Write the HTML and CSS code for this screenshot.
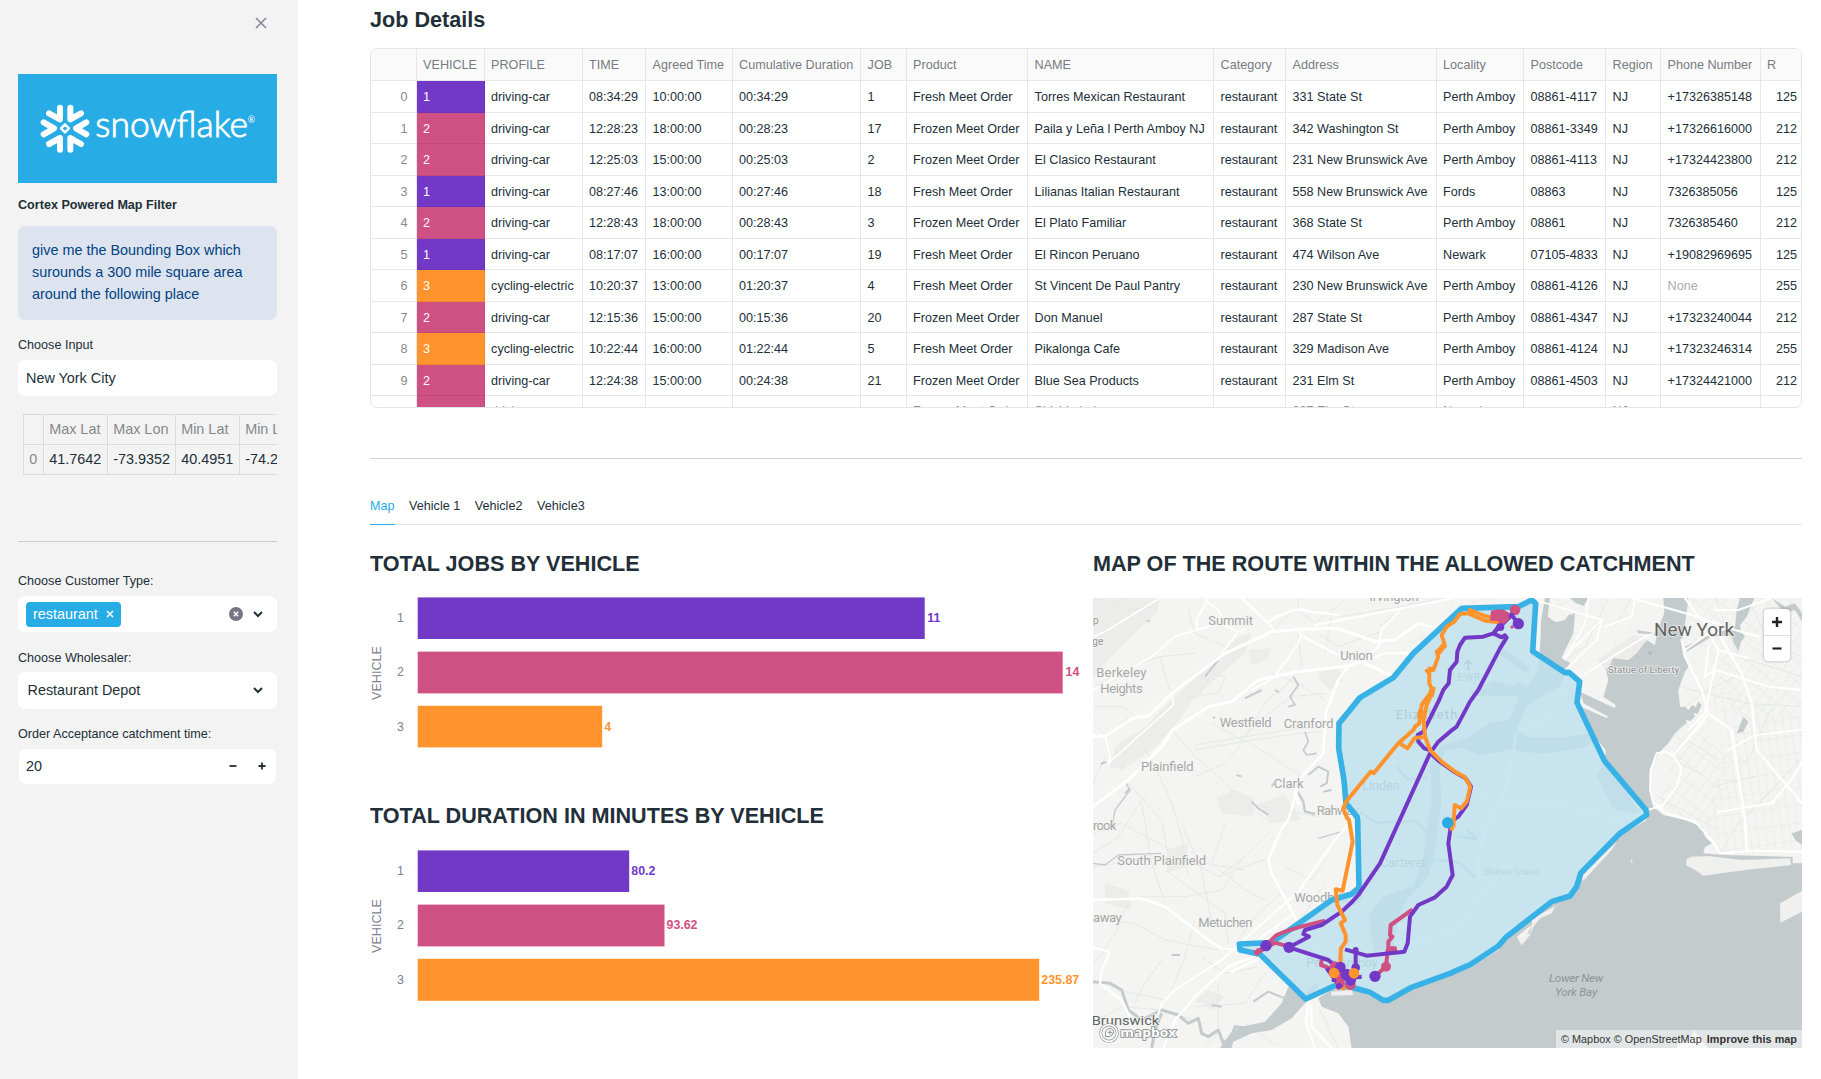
FILE: index.html
```html
<!DOCTYPE html>
<html lang="en">
<head>
<meta charset="utf-8">
<title>Job Details</title>
<link rel="stylesheet" href="styles.css">
</head>
<body>
<div class="app">
<aside class="sidebar">
  <div class="sidebar-top">
    <svg class="close" viewBox="0 0 12 12"><path d="M1 1l10 10M11 1L1 11"/></svg>
  </div>
  <svg class="logo" viewBox="54 222 777 327">
    <g fill="none" stroke="#fff" stroke-width="18" stroke-linecap="round" stroke-linejoin="round">
      <path d="M147 340L180 358V323M243 340L211 358V323M147 432L180 414V449M243 432L211 414V449M131 367L162 385L131 403M259 367L228 385L259 403"/>
      <path stroke-width="7" d="M195 373L207 385L195 397L183 385Z"/>
    </g>
    <text class="logo-word" x="286" y="411" textLength="458" lengthAdjust="spacingAndGlyphs">snowflake</text>
    <text class="logo-mark" x="743" y="368">®</text>
  </svg>
  <h4 class="sidebar-title">Cortex Powered Map Filter</h4>
  <div class="info">give me the Bounding Box which surounds a 300 mile square area around the following place</div>
  <label class="label label-input">Choose Input</label>
  <div class="field"><span class="value">New York City</span></div>
  <div class="bbox-wrap">
    <div class="bbox">
      <span></span><span>Max Lat</span><span>Max Lon</span><span>Min Lat</span><span>Min Lon</span>
      <span class="dim">0</span><b>41.7642</b><b>-73.9352</b><b>40.4951</b><b>-74.2591</b>
    </div>
  </div>
  <hr class="side-rule">
  <label class="label label-type">Choose Customer Type:</label>
  <div class="field">
    <span class="tag">restaurant<svg viewBox="0 0 8 8"><path d="M1 1l6 6M7 1L1 7"/></svg></span>
    <svg class="clear" viewBox="0 0 14 14"><circle cx="7" cy="7" r="7"/><path d="M4.8 4.8l4.4 4.4M9.2 4.8L4.8 9.2"/></svg>
    <svg class="chev" viewBox="0 0 10 7"><path d="M1 1l4 4 4-4"/></svg>
  </div>
  <label class="label label-whole">Choose Wholesaler:</label>
  <div class="field field-select"><span class="value">Restaurant Depot</span>
    <svg class="chev" viewBox="0 0 10 7"><path d="M1 1l4 4 4-4"/></svg>
  </div>
  <label class="label label-time">Order Acceptance catchment time:</label>
  <div class="field field-number"><span class="value">20</span>
    <svg class="step" viewBox="0 0 8 8"><path d="M.5 4h7"/></svg>
    <svg class="step step-plus" viewBox="0 0 8 8"><path d="M.5 4h7M4 .5v7"/></svg>
  </div>
</aside>

<main class="main">
  <h3 class="title">Job Details</h3>
  <div class="grid">
    <div class="row head"><i></i><i>VEHICLE</i><i>PROFILE</i><i>TIME</i><i>Agreed Time</i><i>Cumulative Duration</i><i>JOB</i><i>Product</i><i>NAME</i><i>Category</i><i>Address</i><i>Locality</i><i>Postcode</i><i>Region</i><i>Phone Number</i><i>R</i></div>
    <div class="row"><i>0</i><i class="v1">1</i><i>driving-car</i><i>08:34:29</i><i>10:00:00</i><i>00:34:29</i><i>1</i><i>Fresh Meet Order</i><i>Torres Mexican Restaurant</i><i>restaurant</i><i>331 State St</i><i>Perth Amboy</i><i>08861-4117</i><i>NJ</i><i>+17326385148</i><i>125</i></div>
    <div class="row"><i>1</i><i class="v2">2</i><i>driving-car</i><i>12:28:23</i><i>18:00:00</i><i>00:28:23</i><i>17</i><i>Frozen Meet Order</i><i>Paila y Leña l Perth Amboy NJ</i><i>restaurant</i><i>342 Washington St</i><i>Perth Amboy</i><i>08861-3349</i><i>NJ</i><i>+17326616000</i><i>212</i></div>
    <div class="row"><i>2</i><i class="v2">2</i><i>driving-car</i><i>12:25:03</i><i>15:00:00</i><i>00:25:03</i><i>2</i><i>Frozen Meet Order</i><i>El Clasico Restaurant</i><i>restaurant</i><i>231 New Brunswick Ave</i><i>Perth Amboy</i><i>08861-4113</i><i>NJ</i><i>+17324423800</i><i>212</i></div>
    <div class="row"><i>3</i><i class="v1">1</i><i>driving-car</i><i>08:27:46</i><i>13:00:00</i><i>00:27:46</i><i>18</i><i>Fresh Meet Order</i><i>Lilianas Italian Restaurant</i><i>restaurant</i><i>558 New Brunswick Ave</i><i>Fords</i><i>08863</i><i>NJ</i><i>7326385056</i><i>125</i></div>
    <div class="row"><i>4</i><i class="v2">2</i><i>driving-car</i><i>12:28:43</i><i>18:00:00</i><i>00:28:43</i><i>3</i><i>Frozen Meet Order</i><i>El Plato Familiar</i><i>restaurant</i><i>368 State St</i><i>Perth Amboy</i><i>08861</i><i>NJ</i><i>7326385460</i><i>212</i></div>
    <div class="row"><i>5</i><i class="v1">1</i><i>driving-car</i><i>08:17:07</i><i>16:00:00</i><i>00:17:07</i><i>19</i><i>Fresh Meet Order</i><i>El Rincon Peruano</i><i>restaurant</i><i>474 Wilson Ave</i><i>Newark</i><i>07105-4833</i><i>NJ</i><i>+19082969695</i><i>125</i></div>
    <div class="row"><i>6</i><i class="v3">3</i><i>cycling-electric</i><i>10:20:37</i><i>13:00:00</i><i>01:20:37</i><i>4</i><i>Fresh Meet Order</i><i>St Vincent De Paul Pantry</i><i>restaurant</i><i>230 New Brunswick Ave</i><i>Perth Amboy</i><i>08861-4126</i><i>NJ</i><i class="none">None</i><i>255</i></div>
    <div class="row"><i>7</i><i class="v2">2</i><i>driving-car</i><i>12:15:36</i><i>15:00:00</i><i>00:15:36</i><i>20</i><i>Frozen Meet Order</i><i>Don Manuel</i><i>restaurant</i><i>287 State St</i><i>Perth Amboy</i><i>08861-4347</i><i>NJ</i><i>+17323240044</i><i>212</i></div>
    <div class="row"><i>8</i><i class="v3">3</i><i>cycling-electric</i><i>10:22:44</i><i>16:00:00</i><i>01:22:44</i><i>5</i><i>Fresh Meet Order</i><i>Pikalonga Cafe</i><i>restaurant</i><i>329 Madison Ave</i><i>Perth Amboy</i><i>08861-4124</i><i>NJ</i><i>+17323246314</i><i>255</i></div>
    <div class="row"><i>9</i><i class="v2">2</i><i>driving-car</i><i>12:24:38</i><i>15:00:00</i><i>00:24:38</i><i>21</i><i>Frozen Meet Order</i><i>Blue Sea Products</i><i>restaurant</i><i>231 Elm St</i><i>Perth Amboy</i><i>08861-4503</i><i>NJ</i><i>+17324421000</i><i>212</i></div>
    <div class="row partial"><i></i><i class="v2"></i><i>driving-car</i><i></i><i></i><i></i><i></i><i>Frozen Meet Order</i><i>Shishkabob</i><i></i><i>337 Elm St</i><i>Newark</i><i></i><i>NJ</i><i></i><i></i></div>
  </div>
  <hr class="main-rule">
  <nav class="tabs"><a class="active">Map</a><a>Vehicle 1</a><a>Vehicle2</a><a>Vehicle3</a></nav>
  <div class="columns">
    <section class="charts">
      <h3 class="heading">TOTAL JOBS BY VEHICLE</h3>
      <svg class="chart" viewBox="370 597 710 152">
        <text class="axis-title" transform="translate(381 673) rotate(-90)">VEHICLE</text>
        <text class="tick" x="400.5" y="622">1</text><text class="tick" x="400.5" y="676.2">2</text><text class="tick" x="400.5" y="730.5">3</text>
        <rect class="f1" x="417.7" y="597.4" width="507" height="41.6"/><text class="f1" x="927.3" y="622">11</text>
        <rect class="f2" x="417.7" y="651.6" width="645" height="41.8"/><text class="f2" x="1065.5" y="676.2">14</text>
        <rect class="f3" x="417.7" y="705.8" width="184.5" height="41.6"/><text class="f3" x="604.3" y="730.5">4</text>
      </svg>
      <h3 class="heading heading-second">TOTAL DURATION IN MINUTES BY VEHICLE</h3>
      <svg class="chart" viewBox="370 597 710 152">
        <text class="axis-title" transform="translate(381 673) rotate(-90)">VEHICLE</text>
        <text class="tick" x="400.5" y="622">1</text><text class="tick" x="400.5" y="676.2">2</text><text class="tick" x="400.5" y="730.5">3</text>
        <rect class="f1" x="417.7" y="597.4" width="211.5" height="41.6"/><text class="f1" x="631.3" y="622">80.2</text>
        <rect class="f2" x="417.7" y="651.6" width="246.8" height="41.8"/><text class="f2" x="666.5" y="676.2">93.62</text>
        <rect class="f3" x="417.7" y="705.8" width="621.5" height="42"/><text class="f3" x="1041.3" y="730.5">235.87</text>
      </svg>
    </section>
    <section class="map-col">
      <h3 class="heading">MAP OF THE ROUTE WITHIN THE ALLOWED CATCHMENT</h3>
      <div class="map">
        <svg class="map-svg" viewBox="24 24 2127 1350">
          <defs>
            <pattern id="st1" width="26" height="44" patternUnits="userSpaceOnUse" patternTransform="rotate(38)"><path d="M0 0H26M0 0V44" stroke="#e3e5e6" stroke-width="3" fill="none"/></pattern>
            <pattern id="st2" width="24" height="52" patternUnits="userSpaceOnUse" patternTransform="rotate(-8)"><path d="M0 0H24M0 0V52" stroke="#e6e8e8" stroke-width="3" fill="none"/></pattern>
            <pattern id="st3" width="60" height="48" patternUnits="userSpaceOnUse" patternTransform="rotate(-20)"><path d="M0 0H60M0 0V48" stroke="#e9ebeb" stroke-width="3" fill="none"/></pattern>
          </defs>
          <rect x="24" y="24" width="2127" height="1350" fill="#f4f5f2"/>
          <!-- parks and hills -->
          <g class="hill">
            <path d="M24 24H225L215 70L150 130L90 190L24 260Z"/>
            <path d="M75 530L90 470L180 410L260 330L400 200L460 140L500 130L480 190L400 260L330 320L260 420L200 480L110 540Z"/>
            <path d="M490 180L560 175L545 210L500 225Z"/><path d="M700 240L760 235L775 270L735 300L705 270Z"/>
            <path d="M395 620L450 600L510 625L500 680L410 670Z"/><path d="M520 640L600 615L650 690L560 700Z"/>
            <path d="M250 780L310 760L300 830L245 850Z"/><path d="M60 880L130 900L140 960L60 940Z"/>
            <path d="M330 1230L370 1200L420 1220L380 1260Z"/><path d="M600 1180L640 1150L690 1190L680 1240L630 1210Z"/>
            <path d="M1590 170L1640 135L1680 140L1670 190L1610 210L1560 240L1540 210Z"/>
          </g>
          <!-- minor streets -->
          <path fill="url(#st1)" d="M1790 24H2151V380L1960 400L1870 200L1800 170ZM1780 370L1950 470L1870 740L1720 640L1760 520Z"/>
          <path fill="url(#st2)" d="M1870 280L2151 380V780L1910 800L1860 700L1920 480ZM1850 700L1920 690L2120 690L2115 780L1905 790Z"/>
          <path fill="url(#st3)" d="M930 24H1340V60H1130L985 190L860 150ZM1380 24L1640 24V160L1500 240L1420 220Z"/>
          <g class="minor">
            <path d="M24 290L120 250L150 225L225 200L330 190M225 200L260 320M24 350L110 350L160 385M100 420L130 380M24 400L60 435M40 24L130 60L215 50M60 500L20 590M270 430L330 500L400 560L480 640L560 700M160 440L215 540L260 640L290 740L310 860M120 570L230 690L250 800M330 465L480 440L640 415L720 410M330 480L470 455L640 430L715 425M480 450L560 500L650 560M480 450L420 520L330 560M380 400L470 450L540 380L620 320L720 310M640 130L650 230L600 290L545 330L480 440M300 320L400 310L420 260L380 250L340 320L300 330M310 60L330 130L420 170M700 130L760 170L900 120M640 60L690 100L780 30M760 80L950 50L1070 24M1000 24L880 110M560 250L640 280L720 330M740 70L720 190M560 120L640 50L640 24M110 24L90 80M24 730L110 700L260 780L400 860L560 800M24 830L240 800L480 840M170 640L200 820L240 940M290 700L350 840L380 1000M24 790L100 740L190 600M470 810L410 900L300 920L160 920M420 700L380 820L480 900L540 930M560 720L480 800L400 860M240 840L420 970L430 1060M130 940L90 1030L50 1090L24 1120M24 990L150 1000L240 1050L400 1080M330 990L300 1100L260 1200M600 830L680 870L730 800M480 640L700 680M600 900L520 970L450 1060M640 1000L720 880M24 1300L110 1250L230 1260L360 1300M230 1110L180 1180L150 1240M400 1180L400 1330L360 1370M480 1300L580 1370M700 1250L760 1374M60 1374L160 1290M100 1200L240 1230M600 1100L540 1150L480 1240L330 1250M350 1100L420 1150L520 1130"/>
            <path d="M1700 260L1820 300L1990 340L2151 350M1780 370L1850 310L1950 260M1950 430L2151 425M1960 540L2000 490L2060 350M2151 500L2070 590L1960 700M1880 590L2010 560M1720 620L1900 720M1990 24L2050 160L2151 200M1890 24L1960 200L2151 260M1640 24L1590 110M1400 240L1500 170L1570 24M1900 800L1960 700L2100 560M1750 500L1860 560M1790 440L1900 510"/>
          </g>
          <!-- water -->
          <g class="water">
            <path d="M1380 24L1368 90L1365 190L1425 212L1465 130L1470 70L1450 75L1440 90L1412 97L1388 80L1395 24Z"/>
            <path d="M1455 24H1510L1496 48L1470 38Z"/>
            <path d="M1735 24L1738 70L1720 115L1715 130L1655 120L1660 130L1715 135L1710 165L1685 150L1655 190L1630 210L1585 205L1575 225L1590 240L1562 235L1570 270L1555 320L1592 345L1590 355L1485 305L1495 340L1570 380L1565 384L1488 350L1520 430L1562 480L1560 512L1600 590L1683 660L1685 690L1600 740L1487 860L1475 900L1400 945L1350 965L1348 990L1310 1065L1296 1040L1345 1000L1330 985L1240 1080L1157 1133L980 1200L900 1240L850 1215L800 1190L740 1200L700 1225L710 1250L760 1270L790 1310L800 1374H2151V720L2120 730L2130 750L2151 765V820H2123V800H2100L1920 795L1855 790L1860 772L1880 760L1860 740L1850 710L1800 690L1735 675L1705 650L1695 600L1697 540L1715 500L1730 480L1750 460L1770 430L1790 410L1805 400L1802 388L1815 394L1830 380L1826 368L1838 372L1850 345L1840 335L1832 352L1822 345L1810 360L1800 350L1785 350L1780 300L1800 245L1815 225L1796 185L1790 160L1805 70L1810 24Z"/>
            <path d="M1965 24H2008L1985 80L1965 105L1968 125L1980 140L1968 155L1960 185L1945 155L1940 135L1880 140L1805 185L1800 170L1860 140L1950 110L1955 60Z"/>
            <path d="M2060 24L2100 50L2130 40L2151 70V95L2130 60L2100 70Z"/>
            <path d="M1975 380L1990 395L1975 425L1955 430L1965 405Z"/>
            <path d="M700 1188L660 1240L620 1285L560 1320L500 1330L445 1355L440 1374L405 1374L440 1325L470 1310L540 1295L590 1240L610 1190L650 1220L690 1180Z"/>
            <!-- Newark Bay, Kill Van Kull and Arthur Kill -->
            <g transform="translate(735 18)">
              <path d="M630 150L720 200L690 270L640 300L590 330L560 400L600 425L700 425L790 410L800 435L760 455L640 475L540 460L450 480L400 455L345 465L328 530L335 620L322 700L312 790L290 850L240 900L205 960L190 1060L130 1065L115 960L160 900L250 870L278 790L290 700L305 600L300 500L330 450L420 420L480 380L540 370L565 300L440 300L420 290L490 255L550 270L560 260L595 270L625 220Z"/>
              <path d="M510 150L600 215L590 235L500 170Z"/>
              <path d="M800 540L850 640L940 660L880 580L820 500Z" opacity=".8"/>
            </g>
          </g>
          <!-- islands and spits -->
          <g fill="#f0f1ef">
            <path d="M1820 800L1870 798L1970 810L2115 805L2118 825L1980 840L1855 857L1830 840L1803 825L1805 808Z"/>
            <path d="M2085 940L2151 903V965L2086 998Z"/><path d="M1640 805L1643 818L1638 818Z"/>
            <path d="M1775 1374L1780 1357L1815 1350L1828 1318L1842 1345L1870 1374Z"/>
            <path d="M738 1205L800 1200L805 1215L740 1217Z"/>
            <path d="M1345 985L1435 935L1410 950L1400 970L1365 985L1345 1010L1335 1035L1310 1066L1297 1042L1335 1030Z"/>
            <path d="M1487 860L1595 755L1580 780L1520 845L1495 872Z"/>
            <path d="M1687 182L1703 188L1695 196Z" fill="#b2b5b6"/>
          </g>
          <g class="creek">
            <path d="M24 1175L75 1180L110 1200L130 1260L170 1290L230 1260L280 1275L310 1300L340 1285L350 1330L370 1340L400 1320L415 1360L440 1340L450 1310L490 1315L540 1300M230 1270L210 1320L200 1374"/>
            <path d="M625 260L640 285L615 320L630 345L610 350" stroke-width="5"/>
            <path d="M660 425L670 455L655 480L665 495L695 490" stroke-width="5"/>
            <path d="M670 555L700 530L730 545L725 580L705 590M715 605L740 600" stroke-width="6"/>
            <path d="M635 600L655 635L660 665L690 672" stroke-width="7"/>
            <path d="M500 635L520 655L550 675M455 555L470 560M560 590L570 575M385 380L390 385M185 92L195 95M480 325L530 300M570 300L582 307M360 260L400 210M48 522L64 515M120 610L135 595M260 1095L285 1095M380 1245L410 1250M505 1235L550 1205L600 1225" stroke-width="6"/>
            <path d="M120 575L135 600L90 660L80 720M24 820L60 825L100 795L230 790M700 745L770 725" stroke-width="4"/>
            <path transform="translate(735 18)" d="M90 650L140 680L260 675L290 710M200 510L230 550L290 545M310 790L390 800L440 850M380 720L440 730L410 700" stroke-width="8"/>
          </g>
          <!-- main roads -->
          <g class="road">
            <path d="M24 438H60L150 382L190 378L260 310L420 190L560 125L640 118L760 115L870 155L930 150L1000 100L1110 130" stroke-width="9"/>
            <path d="M24 650L130 570L230 470L262 420L370 350L440 335L520 270L640 245L790 228L830 215L925 260" stroke-width="9"/>
            <path d="M470 24L560 110L570 125M640 118L645 135L760 195L800 210M640 60L760 75M620 60L550 95L570 80L650 55L690 70M690 105L950 55L1110 24M24 430M830 215L880 170L890 120L950 55M830 215L900 190L970 190" stroke-width="6"/>
            <path d="M370 24L335 90L335 120L270 140L200 200L110 250L24 300M335 120L400 100L460 125L480 120M460 125L410 190M620 60L650 55M650 130L640 160L565 265L500 300M60 438L75 500L70 520M225 24L60 125L24 140M260 310L265 345L215 390L75 515M360 30L400 60L430 110" stroke-width="5"/>
            <path d="M790 228L760 270L722 370L715 490L650 560L630 620L610 690L590 715L550 810L560 850L640 1000L720 1110M630 600L640 640" stroke-width="8"/>
            <path d="M790 700L735 770L640 905L520 1010L455 1070L410 1110L270 1200L230 1240L220 1270M620 975L505 1060" stroke-width="6"/>
            <path d="M24 930L170 925L240 950L370 1050L410 1075L455 1078M24 1073L75 1085L50 1140L45 1180L110 1230L140 1290" stroke-width="7"/>
            <path d="M520 1095L430 1130L340 1210L270 1290L235 1374M525 1105L440 1145" stroke-width="7"/>
            <path d="M670 1235L663 1300L690 1374M678 1235L680 1310L740 1374" stroke-width="7"/>
            <path d="M1330 24L1550 90L1535 150L1440 240M1550 90L1440 200M1480 265L1590 195L1680 140L1705 130M1650 24L1640 80L1560 110M1510 24L1500 100L1440 210" stroke-width="5"/>
            <path d="M1640 24L1820 75L1950 120L2020 140M1800 24L1840 80L1900 130L1970 250L2000 340L2015 480L2151 640M1790 150L1800 200L1850 300L1870 370L1940 420L1960 560L1980 690L1985 780" stroke-width="7"/>
            <path d="M1800 180L1870 130L1900 180L1990 205M1870 170L1860 260L1890 240L2050 290L2151 300M1870 370L1765 495L1740 485L1715 490L1697 540L1695 600L1705 640L1730 650L1775 590L1790 535L1765 500M1683 662L1720 650L1740 670L1830 695L1880 750L1905 790L2010 782L2151 785M1860 390L1760 500M2060 24L1960 60L1890 60M2151 420L2010 435L1930 480M1900 665L2060 640L2110 580L2151 520M1900 180L1860 370L1810 420" stroke-width="6"/>
            <path transform="translate(735 18)" d="M740 250L640 370L560 410L540 520L515 610L460 700L440 850M420 570L520 630L700 630L860 670L940 650M190 1060L380 1000L480 860L600 740" stroke-width="6"/>
          </g>
          <g class="place">
            <text x="370" y="104" textLength="134">Summit</text>
            <text x="853" y="33" textLength="148">Irvington</text>
            <text x="766" y="210" textLength="97">Union</text>
            <text x="34" y="261" textLength="150">Berkeley</text><text x="46" y="309" textLength="127">Heights</text>
            <text x="404" y="411" textLength="156">Westfield</text>
            <text x="596" y="413" textLength="150">Cranford</text>
            <text x="168" y="542" textLength="158">Plainfield</text>
            <text x="566" y="595" textLength="90">Clark</text>
            <text x="695" y="674" textLength="126">Rahway</text>
            <text x="24" y="719" textLength="70">rook</text>
            <text x="97" y="825" textLength="266">South Plainfield</text>
            <text x="628" y="937" textLength="205">Woodbridge</text>
            <text x="24" y="996" textLength="86">away</text>
            <text x="340" y="1011" textLength="162">Metuchen</text>
          </g>
          <g class="place covered">
            <text x="832" y="601" textLength="112">Linden</text>
            <text x="932" y="388" textLength="185" fill="#4f5254">Elizabeth</text>
            <text x="885" y="832" textLength="138">Carteret</text>
            <text x="663" y="1132" textLength="215">Perth Amboy</text>
            <text x="1332" y="361" textLength="145" fill="#f4f5f2">Bayonne</text>
            <text x="1118" y="273" textLength="68" font-size="32">EWR</text>
            <text x="1197" y="854" textLength="165" font-size="28">Staten Island</text>
            <path d="M1150 208V236M1136 224L1150 215L1164 224M1144 237H1156" fill="none" stroke="#808486" stroke-width="5"/>
          </g>
          <path class="catch" d="M1130 55L1300 50L1340 30L1352 40L1343 184L1440 248L1452 247L1484 275L1476 338L1558 512L1683 660L1685 675L1605 730L1487 850L1475 890L1455 918L1400 935L1265 1040L1240 1068L1157 1123L1095 1150L980 1192L910 1231H895L855 1207L775 1185L750 1187L662 1227L525 1093L465 1080L463 1062L560 1058L740 930L800 912L822 893L818 690L816 680L783 640L777 570L761 475L762 400L825 323L925 263L985 190Z"/>
          <g class="dark-place">
            <text x="24" y="101" font-size="30" fill="#999">p</text><text x="22" y="166" font-size="30" fill="#999">ge</text>
            <text x="1707" y="138" font-size="54" textLength="240" lengthAdjust="spacingAndGlyphs">New York</text>
            <text x="20" y="1306" font-size="41" textLength="203" lengthAdjust="spacingAndGlyphs">Brunswick</text>
          </g>
          <text class="statue" x="1569" y="250" textLength="214">Statue of Liberty</text>
          <g class="bay"><text x="1392" y="1175" textLength="163">Lower New</text><text x="1410" y="1217" textLength="127">York Bay</text></g>
          <!-- vehicle routes -->
          <g class="route pink">
            <path d="M510 1093L543 1065L575 1035L600 1025L640 1012L720 992M510 1092L545 1072L570 1058L612 1070M983 958L917 1005L915 1035L922 1040L910 1055V1075H930V1080L908 1080L903 1130L870 1158M710 1110L708 1125L735 1135L770 1170L757 1198M1230 80L1270 85L1290 60"/>
            <path d="M510 1092L525 1080" stroke-width="18"/>
          </g>
          <g class="route purple">
            <path d="M1280 75L1255 100L1225 130L1195 140L1140 143L1125 165L1117 185L1115 215L1095 240L1091 280L1075 300L1060 335L1035 385L1015 425L998 435L1000 455L1018 475L1035 480"/>
            <path d="M1240 110L1225 130L1250 142L1260 136L1265 143L1245 175L1180 300L1155 335L1115 410L1095 425L1060 455L1035 490L960 655L935 710L885 820L820 915L800 937L770 965L710 1005L660 1020L655 1032L672 1040L612 1072L730 1110L765 1140L800 1170"/>
            <path d="M1037 490L1060 512L1110 547L1142 565L1158 590L1145 645L1120 680L1098 695L1095 725L1090 760L1103 855L1085 890L1050 922L1000 945L975 980L968 1060L958 1085L845 1097L780 1078M812 1075V1130M1280 75L1300 101M725 1135L765 1190M740 1170L830 1160"/>
          </g>
          <g class="route orange">
            <path d="M1252 97L1235 96L1200 92L1150 70L1125 72L1108 95L1085 110L1070 135L1080 168L1055 185L1060 200L1045 240L1025 242L1033 250V280L1040 295L1035 310L1010 345L1003 400L990 410L985 420L940 460L866 550L857 545L783 635L775 655L785 682L792 690L803 755L773 902L752 898L757 945L780 990L767 1000L782 1035V1055L768 1075L765 1130"/>
            <path d="M1255 90L1235 86L1200 78L1155 60L1160 75M1045 300L1025 345L1016 390L1020 440L1035 480L1070 515L1110 545L1140 562L1156 590L1145 635L1128 655L1109 645L1105 712M945 460L967 475L990 443L1015 442M1062 190L1080 165M775 1185V1200"/>
            <path d="M1028 238L1046 238M1076 165L1058 190M1044 290L1038 320M1008 360L1003 385" stroke-width="16"/>
          </g>
          <g fill="#cf5082">
            <path d="M1218 62L1240 58L1258 60L1272 68V90L1255 104L1235 92L1215 92Z"/>
            <circle cx="1290" cy="60" r="16"/><circle cx="1281" cy="111" r="5"/><circle cx="903" cy="1130" r="15"/><circle cx="750" cy="1130" r="16"/><circle cx="768" cy="1162" r="17"/><circle cx="765" cy="1182" r="14"/><circle cx="796" cy="1184" r="16"/>
          </g>
          <g fill="#7239c7">
            <circle cx="1300" cy="101" r="17"/><circle cx="1279" cy="76" r="8"/><circle cx="1246" cy="111" r="12"/><circle cx="543" cy="1067" r="17"/><circle cx="612" cy="1072" r="17"/><circle cx="870" cy="1159" r="17"/>
            <circle cx="766" cy="1131" r="16"/><circle cx="812" cy="1133" r="13"/><circle cx="785" cy="1154" r="18"/><circle cx="797" cy="1171" r="16"/><circle cx="762" cy="1188" r="9"/><circle cx="812" cy="1080" r="9"/>
          </g>
          <g fill="#ff942e"><circle cx="747" cy="1149" r="16"/><circle cx="807" cy="1150" r="16"/><circle cx="1100" cy="716" r="7"/><circle cx="775" cy="1196" r="5"/></g>
          <circle cx="1088" cy="698" r="17" fill="#27a9e1"/>
          <g class="brand">
            <circle cx="72" cy="1329" r="25" fill="none" stroke="#8b8f90" stroke-width="9"/><circle cx="72" cy="1329" r="25" fill="none" stroke="#fff" stroke-width="5"/>
            <path d="M62 1340Q58 1318 74 1315Q90 1318 84 1332Q76 1343 62 1340Z" fill="#fff" stroke="#8b8f90" stroke-width="3"/><path d="M75 1320V1334M68 1327H82" stroke="#8b8f90" stroke-width="3"/>
            <text x="106" y="1341" textLength="168" lengthAdjust="spacingAndGlyphs">mapbox</text>
          </g>
        </svg>
        <div class="zoom"><svg viewBox="0 0 10 10"><path d="M0 5h10M5 0v10"/></svg><svg viewBox="0 0 10 10"><path d="M0 5h10"/></svg></div>
        <div class="attrib"><span>© Mapbox</span> <span>© OpenStreetMap</span> <b>Improve this map</b></div>
      </div>
    </section>
  </div>
</main>
</div>
</body>
</html>
```
FILE: styles.css
```css
* { box-sizing: border-box; }
body { margin: 0; background: #fff; color: #222f38; font-family: "Liberation Sans", Arial, sans-serif; font-size: 14.4px; overflow: hidden; }
h3, h4, hr { margin: 0; }
svg { display: block; }
.app { display: flex; width: 1821px; height: 1079px; overflow: hidden; }

.sidebar { display: flex; flex-direction: column; width: 298px; padding: 0 21px 0 18px; background: #f3f3f3; }
.sidebar-top { flex: none; display: flex; justify-content: flex-end; height: 74px; padding: 17px 10px 0 0; }
.close { width: 12px; height: 12px; fill: none; stroke: #808495; stroke-width: 1.5; }
.logo { flex: none; width: 259px; height: 109px; background: #27ace5; }
.logo-word { font: 300 106px Lato, sans-serif; fill: #fff; stroke: #fff; stroke-width: 2.5; }
.logo-mark { font: 26px Lato, sans-serif; fill: #fff; }
.sidebar-title { margin-top: 12px; font-size: 12.6px; line-height: 20px; }
.info { margin-top: 11px; height: 94px; padding: 14.4px 14px; border-radius: 7px; background: #dde4f0; color: #004280; line-height: 21.6px; }
.label { height: 20px; font-size: 12.6px; line-height: 20px; }
.label-input { margin-top: 15px; }
.label-type { margin-top: 29px; }
.label-whole { margin-top: 16px; }
.label-time { margin-top: 15px; }
.field { display: flex; align-items: center; height: 36px; margin-top: 5px; padding: 0 8px; border-radius: 7px; background: #fff; }
.value { flex: 1; }
.bbox-wrap { height: 61px; margin-top: 18px; padding-left: 5px; overflow: hidden; }
.bbox { display: grid; width: max-content; grid-template-columns: 20px 64px 68px 64px 68px; grid-auto-rows: 30px; border-top: 1px solid #dadbdc; border-left: 1px solid #dadbdc; }
.bbox > * { padding-left: 5.2px; border-right: 1px solid #dadbdc; border-bottom: 1px solid #dadbdc; color: #85898e; font-weight: 400; line-height: 29px; white-space: nowrap; }
.bbox > b { color: #222f38; }
.side-rule { flex: none; height: 1px; margin-top: 66px; border: 0; background: #cbcbcc; }
.tag { display: flex; align-items: center; gap: 8px; width: 95px; height: 25px; margin-right: auto; padding: 0 7px; border-radius: 4px; background: #27ace5; color: #fff; }
.tag svg { width: 8px; height: 8px; fill: none; stroke: #fff; stroke-width: 1.5; }
.clear { width: 14px; height: 14px; margin-right: 10px; fill: #747686; }
.clear path { stroke: #fff; stroke-width: 1.4; }
.chev { width: 10px; height: 7px; margin-right: 6px; fill: none; stroke: #222f38; stroke-width: 2; }
.field-select { height: 37px; margin-top: 4px; padding-left: 9.5px; padding-bottom: 1px; }
.field-number { height: 35px; margin: 5px 1px 0; padding-left: 7px; padding-bottom: 1px; }
.step { width: 8px; height: 8px; margin-right: 21px; stroke: #222f38; stroke-width: 1.8; }
.step-plus { margin-right: 2.5px; }

.main { width: 1523px; padding: 0 19px 0 72px; }
.title { height: 48px; padding-top: 7px; font-size: 21.6px; line-height: 26px; }
.grid { height: 360px; border: 1px solid #e4e5e6; border-radius: 7px; overflow: hidden; }
.row { display: grid; grid-template-columns: 45.5px 68px 98px 63.5px 86.5px 128.5px 45.5px 121.5px 186px 72px 150.5px 87.5px 82px 55px 100px 41px; height: 31.5px; }
.row i { padding-left: 6.6px; border-right: 1px solid #e6e7e8; border-bottom: 1px solid #e6e7e8; font-size: 12.6px; font-style: normal; line-height: 32px; white-space: nowrap; overflow: hidden; }
.row i:first-child { padding: 0 8px 0 0; color: #868a8e; text-align: right; }
.row i:last-child { padding: 0 5px 0 0; border-right: 0; text-align: right; }
.row.head { height: 32px; background: #fafafa; }
.row.head i { color: #767b81; line-height: 33px; }
.row.head i:last-child { padding-left: 6px; text-align: left; }
.row.partial i { line-height: 30.5px; color: #8a9095; }
.row i.none { color: #a9acae; }
.row i.v1, .row i.v2, .row i.v3 { color: #fff; border-color: rgba(0, 0, 0, .07); }
.row i.v1 { background: #7239c7; }
.row i.v2 { background: #cf5082; }
.row i.v3 { background: #ff942e; }
.main-rule { height: 1px; margin-top: 50px; border: 0; background: #d3d5d7; }
.tabs { display: flex; gap: 14.6px; height: 66px; padding-top: 29px; border-bottom: 1px solid #e6e7e8; }
.tabs a { height: 37px; border-bottom: 1px solid transparent; font-size: 12.6px; line-height: 36px; }
.tabs .active { color: #27ace5; border-color: #27ace5; }
.columns { display: grid; grid-template-columns: 709px 709px; gap: 14px; }
.heading { height: 72px; padding-top: 26px; font-size: 21.6px; line-height: 26px; white-space: nowrap; }
.heading-second { height: 101px; padding-top: 54px; }
.chart { width: 710px; height: 152px; overflow: visible; }
.chart text { font-size: 12.4px; font-weight: 700; }
.chart text.axis-title, .chart text.tick { fill: #7d8090; font-weight: 400; text-anchor: middle; }
.chart .axis-title { font-size: 12.6px; }
.f1 { fill: #7239c7; }
.f2 { fill: #cf5082; }
.f3 { fill: #ff942e; }
.map-col .heading { height: 73px; }
.map { position: relative; width: 709px; height: 450px; overflow: hidden; }
.map-svg { width: 709px; height: 450px; }
.hill { fill: #ecedeb; }
.minor { fill: none; stroke: #e6e8e8; stroke-width: 3; }
.water { fill: #c4cbcd; }
.creek { fill: none; stroke: #c4cbcd; stroke-width: 9; stroke-linejoin: round; }
.road { fill: none; stroke: #fff; stroke-linejoin: round; stroke-linecap: round; }
.place { font: 39px Roboto, sans-serif; fill: #a6a7a8; }
.place text, .dark-place text, .statue { paint-order: stroke; stroke: rgba(245, 245, 242, .75); stroke-width: 5; }
.covered { fill: #8c9092; }
.covered text { stroke: none; }
.dark-place { font-family: Roboto, sans-serif; fill: #626465; }
.statue { font: 500 29px Roboto, sans-serif; fill: #9c9c9f; }
.bay { font: italic 35px Roboto, sans-serif; fill: #8b9698; }
.catch { fill: rgba(191, 225, 238, .84); stroke: #38b2e6; stroke-width: 17; stroke-linejoin: round; }
.route { fill: none; stroke-width: 12; stroke-linejoin: round; }
.pink { stroke: #cf5082; }
.purple { stroke: #7239c7; }
.orange { stroke: #ff942e; }
.brand text { font: 700 37px "Open Sans", sans-serif; fill: #fff; stroke: #8b8f90; stroke-width: 5; paint-order: stroke; }
.zoom { position: absolute; top: 11px; right: 12px; width: 26px; height: 52px; border-radius: 4px; background: #fff; box-shadow: 0 0 0 1.5px rgba(0, 0, 0, .1); }
.zoom svg { width: 26px; height: 26px; padding: 8px; stroke: #222; stroke-width: 2.4; }
.zoom svg + svg { border-top: 1px solid #ddd; }
.attrib { position: absolute; right: 0; bottom: 0; height: 18px; padding: 0 5px 0 4.5px; background: rgba(255, 255, 255, .5); color: #333; font-size: 10.8px; line-height: 18px; letter-spacing: .05px; white-space: nowrap; }
.attrib b { margin-left: 2px; }
```
